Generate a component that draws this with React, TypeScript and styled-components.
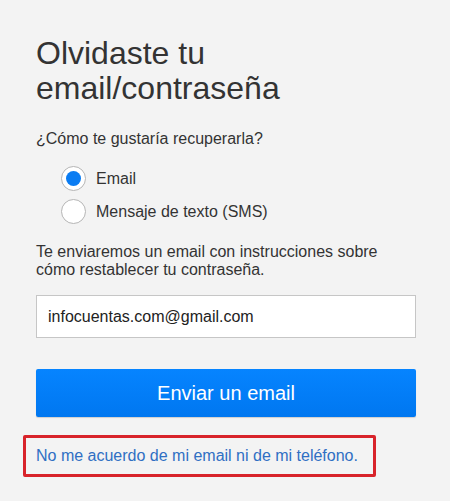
import styled, { createGlobalStyle } from "styled-components";

const GlobalStyle = createGlobalStyle`
  html, body {
    margin: 0;
    padding: 0;
    background: #f3f3f3;
  }
  body {
    font-family: "Liberation Sans", Arial, sans-serif;
    color: #333;
  }
`;

const options = [
  { id: "email", label: "Email", checked: true },
  { id: "sms", label: "Mensaje de texto (SMS)", checked: false },
];

export default function App() {
  return (
    <>
      <GlobalStyle />
      <Page>
        <Form>
          <Title>
            Olvidaste tu
            <br />
            email/contraseña
          </Title>
          <Question>¿Cómo te gustaría recuperarla?</Question>
          <RadioList>
            {options.map((opt) => (
              <RadioRow key={opt.id}>
                <Radio $checked={opt.checked} />
                <RadioLabel>{opt.label}</RadioLabel>
              </RadioRow>
            ))}
          </RadioList>
          <Hint>
            Te enviaremos un email con instrucciones sobre
            <br />
            cómo restablecer tu contraseña.
          </Hint>
          <EmailInput readOnly value="infocuentas.com@gmail.com" />
          <SubmitButton type="button">Enviar un email</SubmitButton>
          <Highlight>
            <HelpLink href="#">No me acuerdo de mi email ni de mi teléfono.</HelpLink>
          </Highlight>
        </Form>
      </Page>
    </>
  );
}

const Page = styled.div`
  min-height: 501px;
  padding: 36px 0 0 36px;
  box-sizing: border-box;
`;

const Form = styled.div`
  width: 380px;
  display: flex;
  flex-direction: column;
  align-items: flex-start;
`;

const Title = styled.h1`
  margin: 0;
  font-size: 32px;
  line-height: 35px;
  font-weight: 400;
  color: #333;
`;

const Question = styled.p`
  margin: 23px 0 0;
  font-size: 16px;
  line-height: 20px;
  color: #333;
`;

const RadioList = styled.div`
  margin-top: 13px;
  display: flex;
  flex-direction: column;
`;

const RadioRow = styled.label`
  height: 33px;
  display: flex;
  align-items: center;
  gap: 10px;
  padding-left: 25px;
`;

const Radio = styled.span<{ $checked: boolean }>`
  width: 25px;
  height: 25px;
  box-sizing: border-box;
  border-radius: 50%;
  border: 1px solid #b5b5b5;
  background: #fff;
  display: flex;
  align-items: center;
  justify-content: center;

  &::after {
    content: "";
    width: 15px;
    height: 15px;
    border-radius: 50%;
    background: #0a7cf2;
    display: ${(p) => (p.$checked ? "block" : "none")};
  }
`;

const RadioLabel = styled.span`
  font-size: 16px;
  line-height: 20px;
  color: #333;
`;

const Hint = styled.p`
  margin: 15px 0 0;
  font-size: 16px;
  line-height: 18px;
  color: #333;
`;

const EmailInput = styled.input`
  margin-top: 16px;
  width: 380px;
  height: 43px;
  box-sizing: border-box;
  border: 1px solid #c6c6c6;
  background: #fff;
  padding: 0 11px;
  font-family: "Liberation Sans", Arial, sans-serif;
  font-size: 16px;
  color: #222;
  outline: none;
`;

const SubmitButton = styled.button`
  margin-top: 31px;
  width: 380px;
  height: 48px;
  border: none;
  border-radius: 2px;
  background: linear-gradient(#0684ff, #0077f0);
  box-shadow: 0 1px 1px rgba(0, 0, 0, 0.15);
  color: #fff;
  font-family: "Liberation Sans", Arial, sans-serif;
  font-size: 20px;
  cursor: pointer;
`;

const Highlight = styled.div`
  margin: 18px 0 0 -13px;
  padding: 8px 15px 8px 10px;
  border: 3px solid #d8232a;
  border-radius: 2px;
`;

const HelpLink = styled.a`
  display: block;
  font-size: 16px;
  line-height: 20px;
  color: #2f6fc3;
  text-decoration: none;
`;
